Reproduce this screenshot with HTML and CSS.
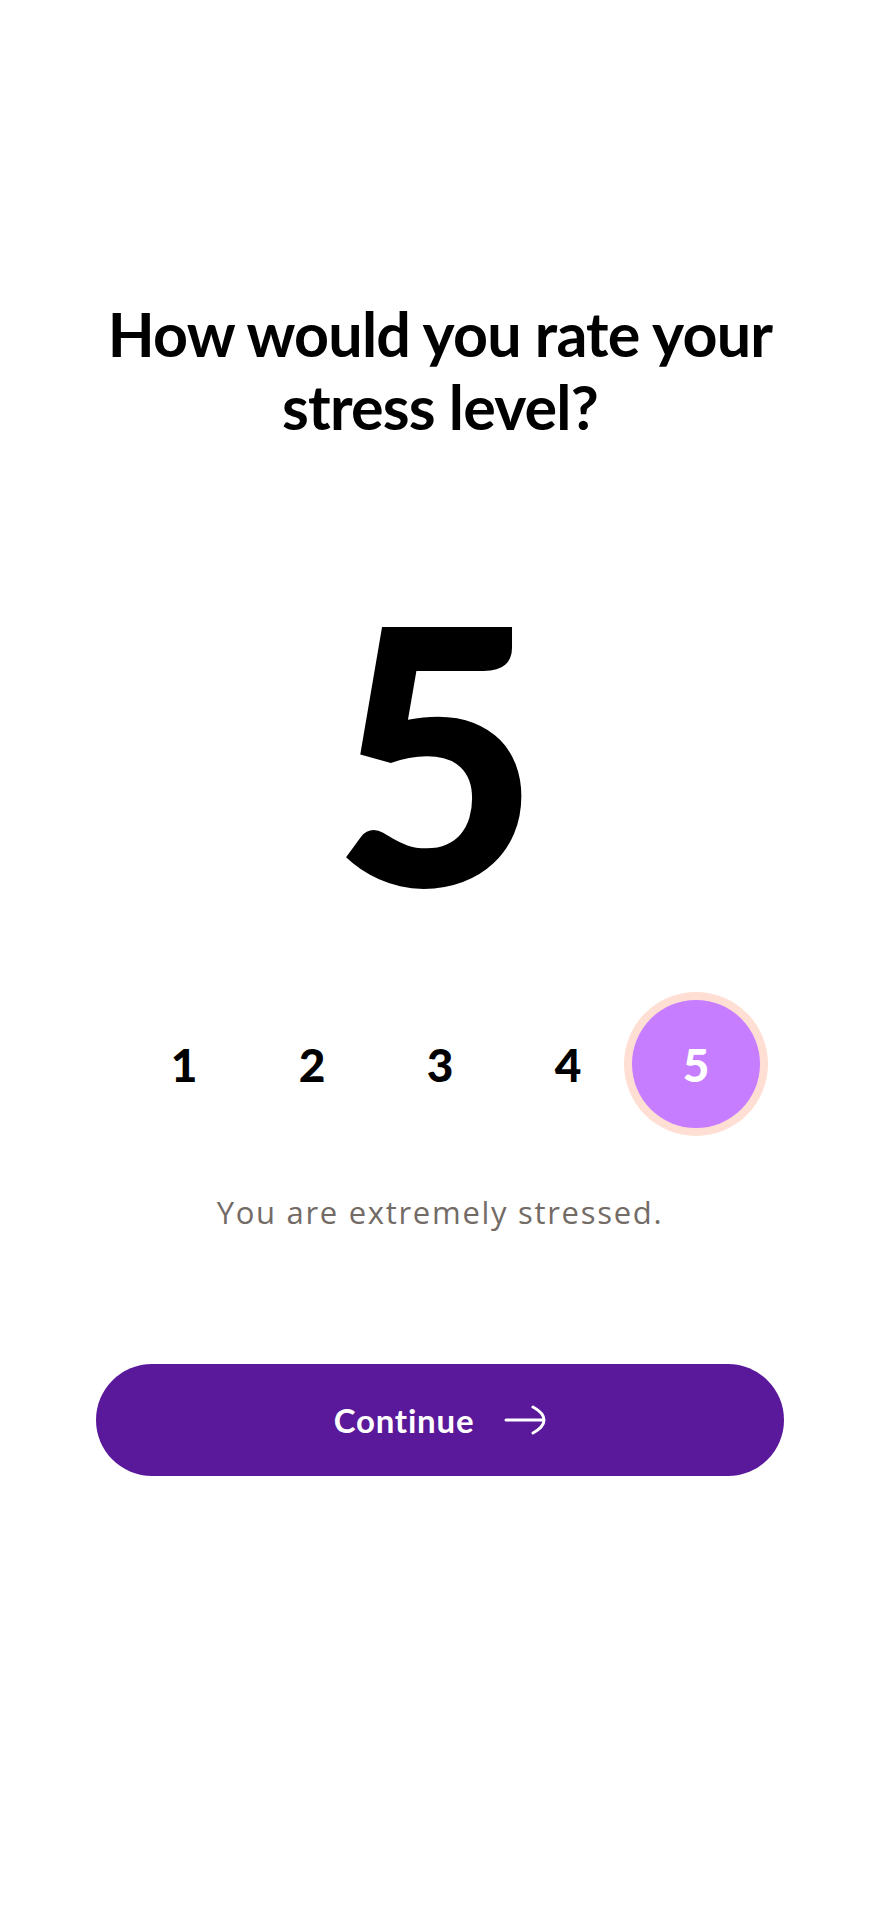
FILE: index.html
```html
<!DOCTYPE html>
<html lang="en">
<head>
<meta charset="utf-8">
<title>Stress level</title>
<link rel="stylesheet" href="styles.css">
</head>
<body>
<main class="screen">
  <h1 class="title">How would you rate your<br>stress level?</h1>
  <div class="value">5</div>
  <div class="scale">
    <button class="opt">1</button>
    <button class="opt">2</button>
    <button class="opt">3</button>
    <button class="opt">4</button>
    <button class="opt selected">5</button>
  </div>
  <p class="caption">You are extremely stressed.</p>
  <button class="cta">
    <span>Continue</span>
    <svg class="arrow" width="42" height="30" viewBox="0 0 42 30" fill="none" stroke="#fff" stroke-width="3" stroke-linecap="round">
      <path d="M2 15 H39"/>
      <path d="M29 2 Q40 8 40 15 Q40 22 29 28"/>
    </svg>
  </button>
</main>
</body>
</html>
```

FILE: styles.css
```css
* { box-sizing: border-box; }
html, body { margin: 0; padding: 0; background: #fff; }
body { font-family: Lato, "Open Sans", sans-serif; color: #000; }

.screen {
  width: 880px;
  min-height: 1912px;
  display: flex;
  flex-direction: column;
  align-items: center;
  padding-top: 297px;
}

.title {
  margin: 0;
  font-size: 61px;
  line-height: 73px;
  font-weight: 700;
  letter-spacing: -0.8px;
  text-align: center;
}

.value {
  margin-top: 127px;
  font-size: 357px;
  line-height: 1;
  font-weight: 900;
  height: 357px;
  margin-left: -8px;
}

.scale {
  margin-top: 73px;
  display: flex;
  width: 640px;
}

.opt {
  width: 128px;
  height: 128px;
  border: 0;
  padding: 0;
  background: transparent;
  border-radius: 50%;
  font-family: inherit;
  font-size: 46px;
  font-weight: 900;
  color: #000;
  display: flex;
  align-items: center;
  justify-content: center;
}

.opt.selected {
  background: #c77dff;
  color: #fff;
  box-shadow: 0 0 0 8px #ffdfd3;
}

.caption {
  margin: 66px 0 0;
  font-family: "Open Sans", Lato, sans-serif;
  font-size: 31px;
  line-height: 36px;
  font-weight: 500;
  letter-spacing: 1.7px;
  color: #736b66;
}

.cta {
  margin-top: 134px;
  width: 688px;
  height: 112px;
  border: 0;
  border-radius: 56px;
  background: #5a189a;
  color: #fff;
  font-family: inherit;
  font-size: 33px;
  font-weight: 700;
  letter-spacing: 0.8px;
  display: flex;
  align-items: center;
  justify-content: center;
  gap: 30px;
}

.arrow { display: block; }
```
